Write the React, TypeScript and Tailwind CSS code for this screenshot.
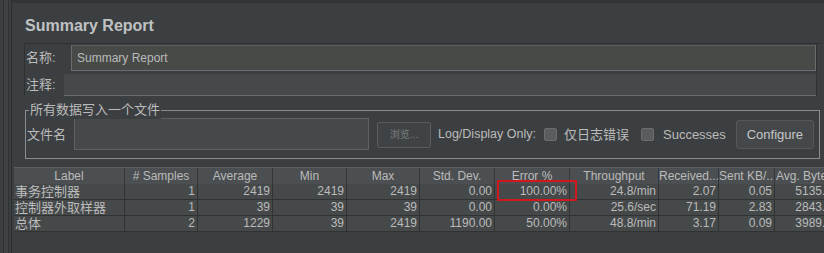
const cols = [
  { name: "Label", w: "w-[111px]" },
  { name: "# Samples", w: "w-[73px]" },
  { name: "Average", w: "w-[75px]" },
  { name: "Min", w: "w-[74px]" },
  { name: "Max", w: "w-[73px]" },
  { name: "Std. Dev.", w: "w-[75px]" },
  { name: "Error %", w: "w-[75px]" },
  { name: "Throughput", w: "w-[89px]" },
  { name: "Received...", w: "w-[60px]" },
  { name: "Sent KB/...", w: "w-[56px]" },
  { name: "Avg. Bytes", w: "w-[60px]" },
];

const rows = [
  ["事务控制器", "1", "2419", "2419", "2419", "0.00", "100.00%", "24.8/min", "2.07", "0.05", "5135.0"],
  ["控制器外取样器", "1", "39", "39", "39", "0.00", "0.00%", "25.6/sec", "71.19", "2.83", "2843.0"],
  ["总体", "2", "1229", "39", "2419", "1190.00", "50.00%", "48.8/min", "3.17", "0.09", "3989.0"],
];

const font = "font-['Liberation_Sans','Noto_Sans_CJK_SC',sans-serif]";

function Checkbox() {
  return <div className="w-[13px] h-[13px] shrink-0 bg-[#5a5d5f] border border-[#6b6e70] rounded-[2px]" />;
}

export default function App() {
  return (
    <div className={`w-[824px] h-[253px] bg-[#3c3f41] flex overflow-hidden text-[#bbbbbb] text-[12px] ${font}`}>
      <div className="w-[12px] h-full flex shrink-0">
        <div className="w-[3px] h-full" />
        <div className="w-[6px] h-full border-l border-r border-[#2f3133] bg-[#3e4143]" />
        <div className="w-[3px] h-full border-r border-[#2b2d2f]" />
      </div>
      <div className="flex-1 flex flex-col border-t-[3px] border-[#323436] min-w-0">
        <div className="h-[40px] pl-[13px] pt-[13px] text-[16px] font-bold text-[#bfc1c3] leading-[20px]">
          Summary Report
        </div>
        <div className="ml-[12px] mr-[2px] flex flex-col border-t border-l border-[#2f3133]">
          <div className="h-[28px] flex items-center">
            <span className="w-[46px] shrink-0 pl-[1px] text-[13px]">名称:</span>
            <div className="flex-1 h-[26px] bg-[#474a47] border border-[#6a6d6f] border-t-[#5c5f61] flex items-center pl-[5px] text-[#b9bbbb]">
              Summary Report
            </div>
            <div className="w-[6px] h-full border-l border-[#2f3133]" />
          </div>
          <div className="h-[24px] flex items-center mt-[1px]">
            <span className="w-[39px] shrink-0 pl-[1px] text-[13px]">注释:</span>
            <div className="flex-1 h-[22px] bg-[#45494a] border-b border-[#6a6d6f]" />
            <div className="w-[6px] h-full border-l border-[#2f3133]" />
          </div>
        </div>
        <div className="ml-[13px] mr-[4px] mt-[13px] h-[49px] border border-[#8a8c8e] relative flex items-center whitespace-nowrap">
          <span className="absolute left-[3px] -top-[10px] bg-[#3c3f41] px-[1px] text-[13px] leading-[18px]">
            所有数据写入一个文件
          </span>
          <span className="ml-[1px] w-[47px] shrink-0 text-[13px]">文件名</span>
          <div className="w-[295px] h-[32px] shrink-0 bg-[#45494a] border border-[#5e6163] mt-[-1px]" />
          <div className="ml-[8px] w-[54px] h-[26px] shrink-0 border border-[#5a5d5f] bg-[#404345] rounded-[2px] flex items-center justify-center text-[10px] text-[#7a7d7f]">
            浏览...
          </div>
          <span className="ml-[7px] shrink-0 text-[12.5px]">Log/Display Only:</span>
          <div className="ml-[8px]"><Checkbox /></div>
          <span className="ml-[7px] shrink-0 text-[13px]">仅日志错误</span>
          <div className="ml-[12px]"><Checkbox /></div>
          <span className="ml-[9px] shrink-0 text-[13px]">Successes</span>
          <div className="ml-[10px] w-[78px] h-[29px] shrink-0 border border-[#55585a] bg-[#45484a] rounded-[3px] flex items-center justify-center text-[13px] text-[#c4c6c8]">
            Configure
          </div>
        </div>
        <div className="mt-[8px] ml-[2px] flex-1 relative">
          <div className="flex h-[17px] bg-[#4b4f51] border-t border-[#5a5e60]">
            {cols.map((c) => (
              <div
                key={c.name}
                className={`${c.w} shrink-0 border-r border-[#35383a] text-center leading-[16px] whitespace-nowrap overflow-hidden`}
              >
                {c.name}
              </div>
            ))}
          </div>
          {rows.map((r, i) => (
            <div key={i} className="flex h-[16px] bg-[#45494a]">
              {r.map((v, j) => (
                <div
                  key={j}
                  className={`${cols[j].w} shrink-0 border-r border-b border-[#303234] leading-[15px] whitespace-nowrap overflow-hidden ${
                    j === 0 ? "text-left pl-[1px] text-[13px]" : "text-right pr-[2px]"
                  }`}
                >
                  {v}
                </div>
              ))}
            </div>
          ))}
          <div className="absolute left-[483px] top-[13px] w-[80px] h-[21px] border-2 border-[#d0181d]" />
        </div>
      </div>
    </div>
  );
}
